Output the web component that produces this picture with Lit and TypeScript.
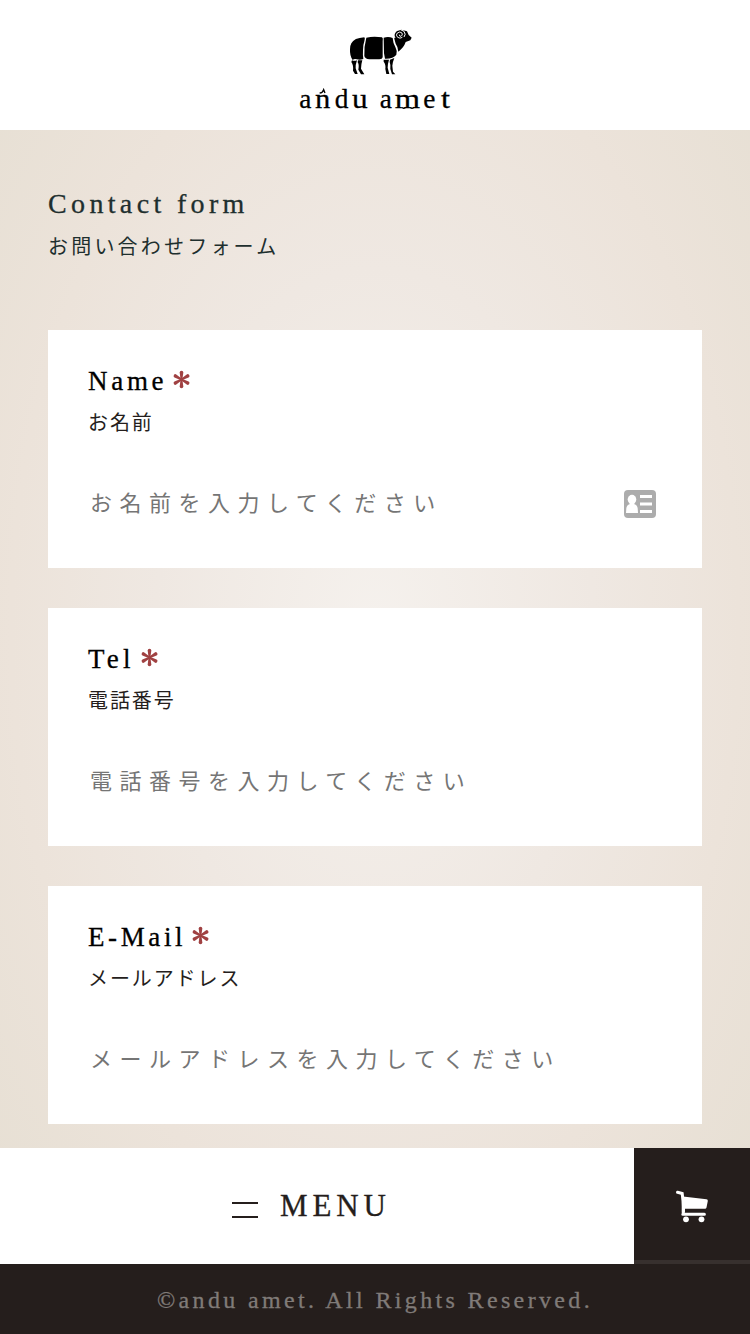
import { LitElement, html, css, svg } from "lit";
import { customElement, property } from "lit/decorators.js";
import { styleMap } from "lit/directives/style-map.js";

@customElement("contact-field")
class ContactField extends LitElement {
  @property() name = "";
  @property() label = "";
  @property() hint = "";
  @property({ type: Number }) tracking = 3.7;
  @property({ type: Boolean }) card = false;

  static styles = css`
    :host {
      display: flex;
      flex-direction: column;
      box-sizing: border-box;
      height: 238px;
      padding: 32px 46px 0 40px;
      background: #fff;
    }
    .title {
      display: flex;
      height: 38px;
      font: 27px/38px "Liberation Serif", serif;
      color: #000;
      -webkit-text-stroke: 0.3px #000;
    }
    .star {
      width: 18px;
      height: 19px;
      margin: 8px 0 0 5px;
    }
    .label {
      height: 44px;
      font: 20px/44px "Noto Sans CJK JP", sans-serif;
      letter-spacing: 1.9px;
      color: #251e1c;
    }
    .entry {
      display: flex;
      justify-content: space-between;
      align-items: center;
      height: 60px;
      margin-top: 30px;
      padding-left: 2px;
      font: 22px/55px "Noto Sans CJK JP", sans-serif;
      letter-spacing: 7.5px;
      color: #757575;
      white-space: nowrap;
    }
    .hint {
      height: 60px;
    }
    .card {
      width: 32px;
      height: 28px;
    }
  `;

  render() {
    return html`
      <div class="title">
        <span style=${styleMap({ letterSpacing: `${this.tracking}px` })}>${this.name}</span>
        <svg class="star" viewBox="-9.5 -9.5 18 19" fill="#a04142">
          ${[0, 60, 120, 180, 240, 300].map(
            (a) => svg`<path transform="rotate(${a})" d="M-.9 0L-1.8-7.1Q-1.8-8.8 0-8.8Q1.8-8.8 1.8-7.1L.9 0Z" />`
          )}
        </svg>
      </div>
      <div class="label">${this.label}</div>
      <div class="entry">
        <span class="hint">${this.hint}</span>
        ${this.card
          ? html`<svg class="card" viewBox="0 0 32 28">
              <rect width="32" height="28" rx="4" fill="#acacac" />
              <g fill="#fff">
                <ellipse cx="8" cy="9.5" rx="4.3" ry="4.7" />
                <path d="M5.6 12h4.8v2.2q3 .8 3.3 4.2l.3 4.6H2l.3-4.6Q2.6 15 5.6 14.2Z" />
                <rect x="16" y="5" width="12" height="3" />
                <rect x="16" y="12.5" width="12" height="3" />
                <rect x="16" y="20" width="12" height="3" />
              </g>
            </svg>`
          : null}
      </div>
    `;
  }
}

@customElement("app-root")
class AppRoot extends LitElement {
  static styles = css`
    :host {
      display: flex;
      flex-direction: column;
      width: 750px;
      height: 1334px;
      overflow: hidden;
      background: #fff;
      font-family: "Liberation Serif", serif;
    }
    header {
      display: flex;
      justify-content: center;
      box-sizing: border-box;
      height: 130px;
      padding-top: 20px;
    }
    .logo {
      width: 170px;
      height: 100px;
    }
    .wordmark {
      font: 82px "Liberation Serif", serif;
      stroke: #000;
      stroke-width: 0.8px;
    }
    main {
      display: flex;
      flex-direction: column;
      box-sizing: border-box;
      height: 1018px;
      padding: 53px 48px 0;
      background: radial-gradient(ellipse 520px 860px at 375px 500px, #f5f1ed 0%, #efe8e2 42%, #ece3da 70%, #e6dfd3 100%);
    }
    h1 {
      margin: 0;
      height: 42px;
      font: 28px/42px "Liberation Serif", serif;
      letter-spacing: 4.35px;
      color: #1e2f2e;
      -webkit-text-stroke: 0.3px #1e2f2e;
    }
    .sub {
      height: 40px;
      font: 20px/42px "Noto Sans CJK JP", sans-serif;
      letter-spacing: 3.2px;
      color: #1e2f2e;
    }
    .fields {
      display: flex;
      flex-direction: column;
      gap: 40px;
      margin-top: 65px;
    }
    nav {
      display: flex;
      height: 116px;
    }
    .menu {
      display: flex;
      align-items: center;
      box-sizing: border-box;
      width: 634px;
      padding-left: 232px;
      color: #251e1c;
      font-size: 31px;
      letter-spacing: 4.9px;
      -webkit-text-stroke: 0.3px #251e1c;
    }
    .bars {
      width: 26px;
      height: 12px;
      margin: 8px 22px 0 0;
      border-top: 2px solid #251e1c;
      border-bottom: 2px solid #251e1c;
    }
    .cart {
      display: flex;
      align-items: center;
      justify-content: center;
      box-sizing: border-box;
      width: 116px;
      background: #251e1c;
      border-bottom: 4px solid #37302e;
    }
    .cart svg {
      width: 34px;
      height: 34px;
      margin-top: 4px;
    }
    footer {
      height: 70px;
      background: #251e1c;
      color: #807b78;
      text-align: center;
      font-size: 24px;
      line-height: 73px;
      letter-spacing: 3.35px;
      white-space: nowrap;
      -webkit-text-stroke: 0.3px #807b78;
    }
  `;

  render() {
    return html`
      <header>
        <svg class="logo" viewBox="0 0 510 300">
          <path d="M184 70Q192 54 223 52Q226 54 223 64Q219 75 219 90Q218 105 220 117Q210 121 200 118Q193 116 188 120Q179 108 180 88Q180 77 184 70Z" />
          <path d="M229 53Q250 48 276 52Q280 54 278 64L278 112Q277 118 268 118H238Q225 117 223 108Q222 78 229 53Z" />
          <path d="M281 53Q296 49 308 54Q309 69 316 81Q322 91 319 104Q309 117 285 116L282 100Z" />
          <path d="M313 56L314 43Q318 30 334 29L351 34L356 45L365 53L361 61L347 66Q342 82 325 95Q324 80 317 71Z" />
          <path d="M186 121Q194 124 201 121Q196 135 197 145L203 162H195L189 152Q191 135 184 126ZM204 121H217Q213 134 213 146L223 163H213L205 149Q208 133 203 127Z" />
          <path d="M281 119H297Q293 132 293 143L298 162H289L286 147Q288 133 281 125ZM300 119L313 114Q308 126 307 137L309 155L316 163H306L301 147Q302 132 299 126Z" />
          <path d="M315 54Q305 39 318 31Q332 25 342 34Q349 43 342 51" fill="none" stroke="#fff" stroke-width="3" />
          <path d="M337 52Q330 57 323 52Q316 45 322 39Q330 33 336 39Q339 46 333 49Q327 49 328 44" fill="none" stroke="#fff" stroke-width="2.8" />
          <g class="wordmark">
            <text x="28" y="264">a</text>
            <text x="75" y="264" textLength="46" lengthAdjust="spacingAndGlyphs">n</text>
            <text x="134" y="264">d</text>
            <text x="186" y="264" textLength="47" lengthAdjust="spacingAndGlyphs">u</text>
            <text x="269" y="264">a</text>
            <text x="314" y="264" textLength="76" lengthAdjust="spacingAndGlyphs">m</text>
            <text x="400" y="264">e</text>
            <text x="453" y="264" textLength="27" lengthAdjust="spacingAndGlyphs">t</text>
          </g>
          <path d="M89 219Q98 218 101 209L105 219M337 262Q341 268 348 262M361 262Q366 268 373 262" fill="none" stroke="#000" stroke-width="4" />
        </svg>
      </header>
      <main>
        <h1>Contact form</h1>
        <div class="sub">お問い合わせフォーム</div>
        <div class="fields">
          <contact-field name="Name" label="お名前" hint="お名前を入力してください" card></contact-field>
          <contact-field name="Tel" tracking="4.2" label="電話番号" hint="電話番号を入力してください"></contact-field>
          <contact-field name="E-Mail" tracking="3.6" label="メールアドレス" hint="メールアドレスを入力してください"></contact-field>
        </div>
      </main>
      <nav>
        <div class="menu"><span class="bars"></span><span>MENU</span></div>
        <div class="cart">
          <svg viewBox="0 0 34 34">
            <path d="M2.5 3.3L7.2 4.5Q8.2 12 8.2 17V23.5M7.8 25.2H29.4" fill="none" stroke="#fff" stroke-width="3" stroke-linecap="round" />
            <path d="M8 7.5L31.5 10.2Q33 10.4 32.8 12L31.5 18.5Q31.2 19.7 30 19.7H10V23.6H8Z" fill="#fff" />
            <circle cx="11" cy="30.3" r="2.9" fill="#fff" />
            <circle cx="26.5" cy="30.3" r="2.9" fill="#fff" />
          </svg>
        </div>
      </nav>
      <footer>©andu amet. All Rights Reserved.</footer>
    `;
  }
}
